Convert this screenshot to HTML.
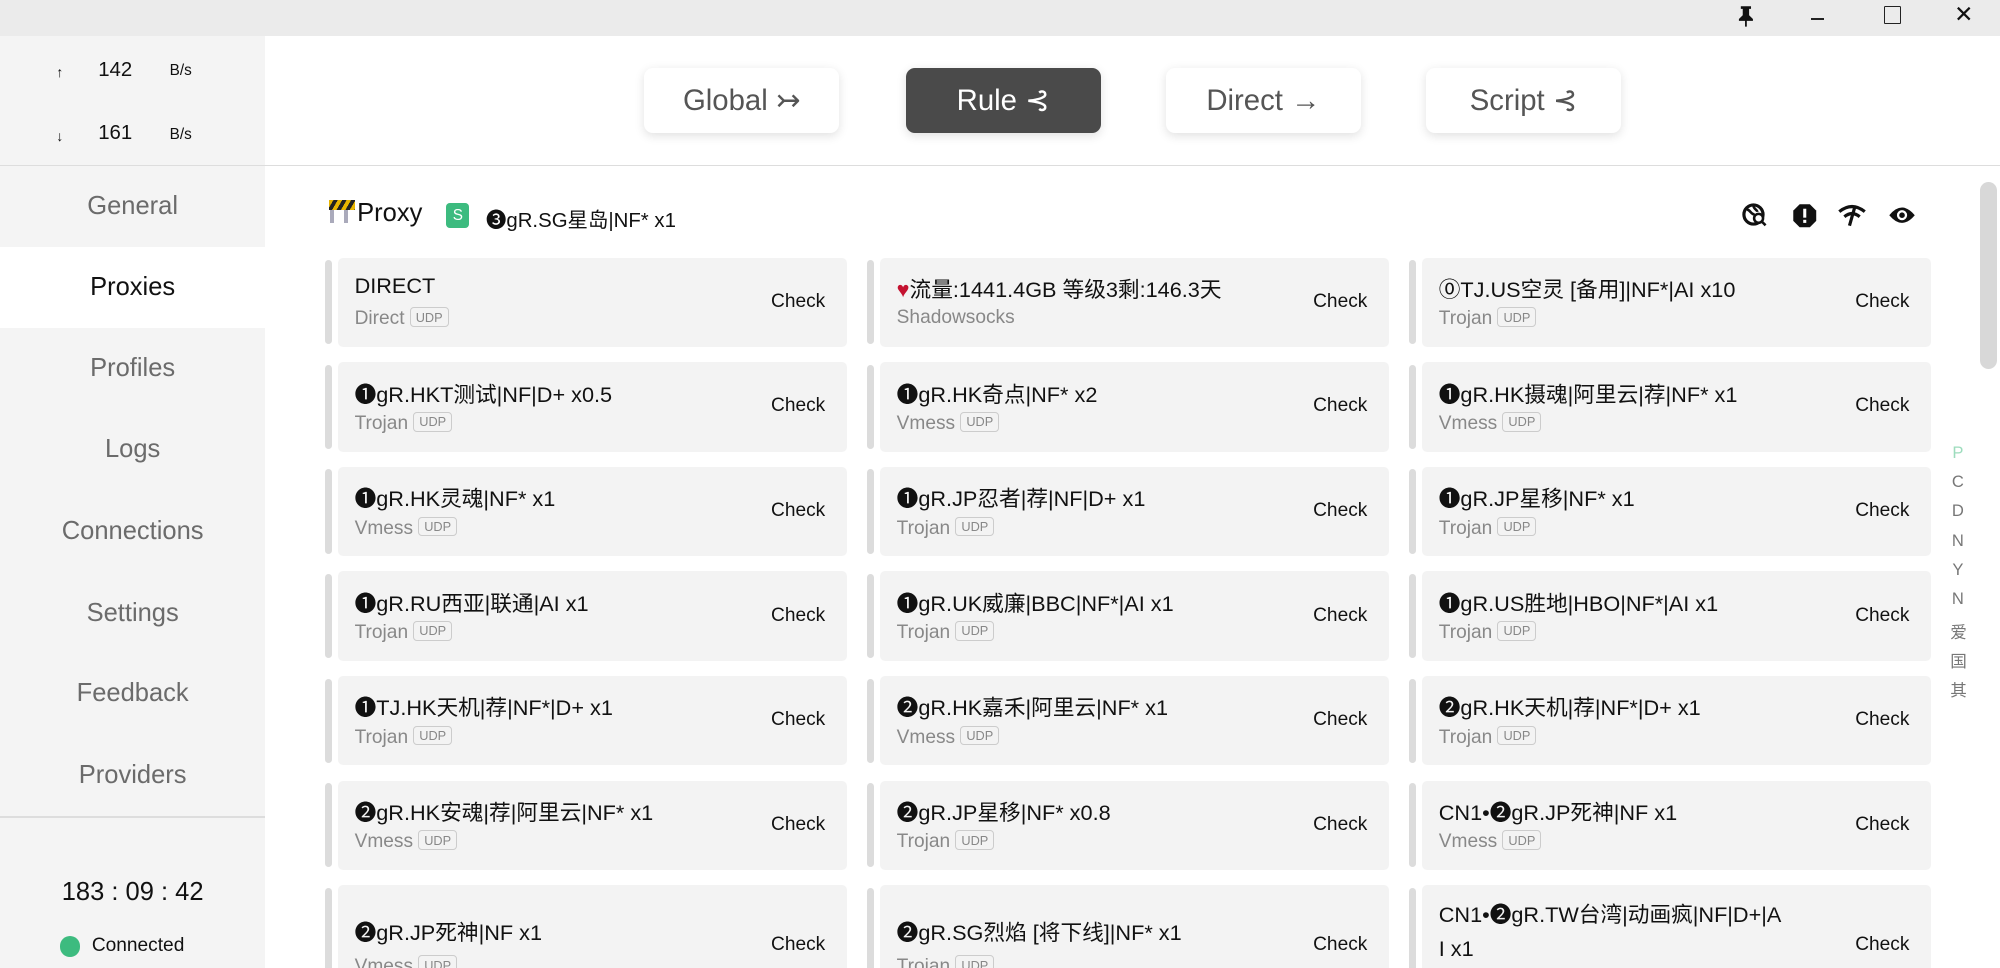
<!DOCTYPE html>
<html><head><meta charset="utf-8"><style>
html,body{margin:0;padding:0;overflow:hidden;background:#fff}
body{width:1568px;height:759px;zoom:1.27551;position:relative;font-family:"Liberation Sans","Noto Sans CJK SC",sans-serif;color:#111}
.abs{position:absolute}
.tb{left:0;top:0;width:1568px;height:28px;background:#ebebeb}
.side{left:0;top:28px;width:208px;height:731px;background:#f4f4f4}
.nav{position:absolute;left:0;width:208px;height:63px;line-height:63px;text-align:center;font-size:20px;color:#6b6b6b}
.btn{position:absolute;top:53px;width:153px;height:51px;border-radius:7px;background:#fff;box-shadow:0 2px 8px rgba(0,0,0,.12);font-size:23px;color:#555;text-align:center;line-height:51px}
.card{position:absolute;width:399px;height:70px;background:#f3f3f3;border-radius:4px}
.bar{position:absolute;width:5px;height:66px;background:#dcdcdc;border-radius:3px}
.nm{position:absolute;left:13px;top:12px;font-size:17px;color:#111;white-space:nowrap}
.ty{position:absolute;left:13px;top:39px;font-size:15px;color:#888}
.udp{display:inline-block;font-size:10px;border:1px solid #ccc;border-radius:3px;padding:1px 4px;margin-left:4px;color:#888;vertical-align:2px}
.ck{position:absolute;right:17px;top:26px;font-size:15px;color:#111}
.idx{position:absolute;left:1529px;font-size:13px;color:#777;width:12px;text-align:center}
</style></head><body>
<div class="abs tb"></div>
<svg class="abs" style="left:1362px;top:4px" width="14" height="18" viewBox="0 0 14 18"><path d="M3 1h8v2h-1.5v5l3 3v1.5H1.5V11l3-3V3H3z M6.3 12.5h1.4V17H6.3z" fill="#111"/></svg>
<div class="abs" style="left:1420px;top:14px;width:10px;height:2px;background:#222"></div>
<div class="abs" style="left:1477px;top:5px;width:12px;height:12px;border:1.5px solid #222;border-radius:1px"></div>
<div class="abs" style="left:1532px;top:1px;font-size:18px">✕</div>
<div class="abs side"></div>
<div class="abs" style="left:44px;top:50px;font-size:11px">↑</div>
<div class="abs" style="left:77px;top:46px;font-size:16px">142</div>
<div class="abs" style="left:133px;top:49px;font-size:12px">B/s</div>
<div class="abs" style="left:44px;top:100px;font-size:11px">↓</div>
<div class="abs" style="left:77px;top:96px;font-size:16px">161</div>
<div class="abs" style="left:133px;top:99px;font-size:12px">B/s</div>
<div class="abs" style="left:0;top:129px;width:1568px;height:1px;background:#ddd"></div>
<div class="abs" style="left:0;top:130px;width:208px;height:64px;background:#f4f4f4;border-bottom-right-radius:14px"></div>
<div class="abs" style="left:0;top:194px;width:208px;height:63px;background:#fff"></div>
<div class="abs" style="left:0;top:257px;width:208px;height:30px;background:#f4f4f4;border-top-right-radius:14px"></div>
<div class="nav" style="top:130px">General</div>
<div class="nav" style="top:194px;color:#111">Proxies</div>
<div class="nav" style="top:257px">Profiles</div>
<div class="nav" style="top:321px">Logs</div>
<div class="nav" style="top:385px">Connections</div>
<div class="nav" style="top:449px">Settings</div>
<div class="nav" style="top:512px">Feedback</div>
<div class="nav" style="top:576px">Providers</div>
<div class="abs" style="left:0;top:640px;width:208px;height:1px;background:#ddd"></div>
<div class="abs" style="left:0;top:688px;width:208px;text-align:center;font-size:20px">183 : 09 : 42</div>
<div class="abs" style="left:47px;top:734px;width:16px;height:16px;border-radius:50%;background:#3dbb7f"></div>
<div class="abs" style="left:72px;top:733px;font-size:15px">Connected</div>
<div class="btn" style="left:505px">Global ↣</div>
<div class="btn" style="left:710px;background:#4a4a4a;color:#fff">Rule ⊰</div>
<div class="btn" style="left:914px">Direct →</div>
<div class="btn" style="left:1118px">Script ⊰</div>
<div class="abs" style="left:258px;top:157px;width:20px;height:8px;background:repeating-linear-gradient(120deg,#e8b500 0 3px,#222 3px 6px)"></div>
<div class="abs" style="left:259px;top:165px;width:3px;height:10px;background:#aab"></div>
<div class="abs" style="left:270px;top:165px;width:3px;height:10px;background:#aab"></div>
<div class="abs" style="left:280px;top:156px;font-size:20px">Proxy</div>
<div class="abs" style="left:350px;top:159px;width:18px;height:20px;background:#3dbb7f;border-radius:3px;color:#fff;font-size:12px;text-align:center;line-height:20px">S</div>
<div class="abs" style="left:381px;top:159px;font-size:16px">❸gR.SG星岛|NF* x1</div>
<svg class="abs" style="left:1366px;top:159px" width="22" height="20" viewBox="0 0 22 20"><circle cx="9" cy="9" r="7.5" fill="none" stroke="#111" stroke-width="2.5"/><path d="M4 5c3 1 3 4 6 4M9 2c0 3 3 3 3 5" stroke="#111" stroke-width="2" fill="none"/><circle cx="13" cy="12" r="3.5" fill="#fff" stroke="#111" stroke-width="2"/><path d="M15.5 14.5l3 3" stroke="#111" stroke-width="2"/></svg>
<svg class="abs" style="left:1405px;top:159px" width="20" height="20" viewBox="0 0 20 20"><path d="M6 1h8l5 5v8l-5 5H6l-5-5V6z" fill="#111"/><rect x="8.8" y="4.5" width="2.4" height="7" fill="#fff"/><rect x="8.8" y="13.2" width="2.4" height="2.4" fill="#fff"/></svg>
<svg class="abs" style="left:1441px;top:160px" width="22" height="18" viewBox="0 0 22 18"><path d="M1 6q10-8 20 0" stroke="#111" stroke-width="2.5" fill="none"/><path d="M5 10q6-5 12 0" stroke="#111" stroke-width="2.5" fill="none"/><path d="M13 3L9 17" stroke="#111" stroke-width="2.5"/></svg>
<svg class="abs" style="left:1480px;top:161px" width="22" height="16" viewBox="0 0 22 16"><path d="M1 8q10-12 20 0q-10 12-20 0z" fill="#111"/><circle cx="11" cy="8" r="4" fill="#fff"/><circle cx="11" cy="8" r="2.2" fill="#111"/></svg>
<div class="abs" style="left:1552px;top:143px;width:14px;height:146px;background:#d8d8d8;border-radius:7px"></div>
<div class="idx" style="top:347px;color:#9ddcbd">P</div>
<div class="idx" style="top:370px">C</div>
<div class="idx" style="top:393px">D</div>
<div class="idx" style="top:416px">N</div>
<div class="idx" style="top:439px">Y</div>
<div class="idx" style="top:462px">N</div>
<div class="idx" style="top:485px">爱</div>
<div class="idx" style="top:508px">国</div>
<div class="idx" style="top:531px">其</div>
<div id="cards"></div>
<script>
const d=[
["DIRECT","Direct"],["<span style='color:#c41230'>♥</span>流量:1441.4GB 等级3剩:146.3天","Shadowsocks",1],["⓪TJ.US空灵 [备用]|NF*|AI x10","Trojan"],
["❶gR.HKT测试|NF|D+ x0.5","Trojan"],["❶gR.HK奇点|NF* x2","Vmess"],["❶gR.HK摄魂|阿里云|荐|NF* x1","Vmess"],
["❶gR.HK灵魂|NF* x1","Vmess"],["❶gR.JP忍者|荐|NF|D+ x1","Trojan"],["❶gR.JP星移|NF* x1","Trojan"],
["❶gR.RU西亚|联通|AI x1","Trojan"],["❶gR.UK威廉|BBC|NF*|AI x1","Trojan"],["❶gR.US胜地|HBO|NF*|AI x1","Trojan"],
["❶TJ.HK天机|荐|NF*|D+ x1","Trojan"],["❷gR.HK嘉禾|阿里云|NF* x1","Vmess"],["❷gR.HK天机|荐|NF*|D+ x1","Trojan"],
["❷gR.HK安魂|荐|阿里云|NF* x1","Vmess"],["❷gR.JP星移|NF* x0.8","Trojan"],["CN1•❷gR.JP死神|NF x1","Vmess"],
["❷gR.JP死神|NF x1","Vmess"],["❷gR.SG烈焰 [将下线]|NF* x1","Trojan"],["CN1•❷gR.TW台湾|动画疯|NF|D+|A<br>I x1",""]];
const xs=[255,680,1105];let h="";
d.forEach((c,i)=>{const col=i%3,row=Math.floor(i/3);const x=xs[col],y=202+row*82;
h+=`<div class="bar" style="left:${x}px;top:${y+2}px"></div><div class="card" style="left:${x+10}px;top:${y}px">`;
if(row==6){h+=`<div class="nm" style="top:${col==2?10:24}px;line-height:27px">${c[0]}</div>`+(c[1]?`<div class="ty" style="top:55px">${c[1]}<span class="udp">UDP</span></div>`:"")+`<div class="ck" style="top:38px">Check</div>`;}
else h+=`<div class="nm">${c[0]}</div><div class="ty">${c[1]}${c[2]?"":'<span class="udp">UDP</span>'}</div><div class="ck">Check</div>`;
h+="</div>";});
document.getElementById("cards").innerHTML=h;
</script>
</body></html>
